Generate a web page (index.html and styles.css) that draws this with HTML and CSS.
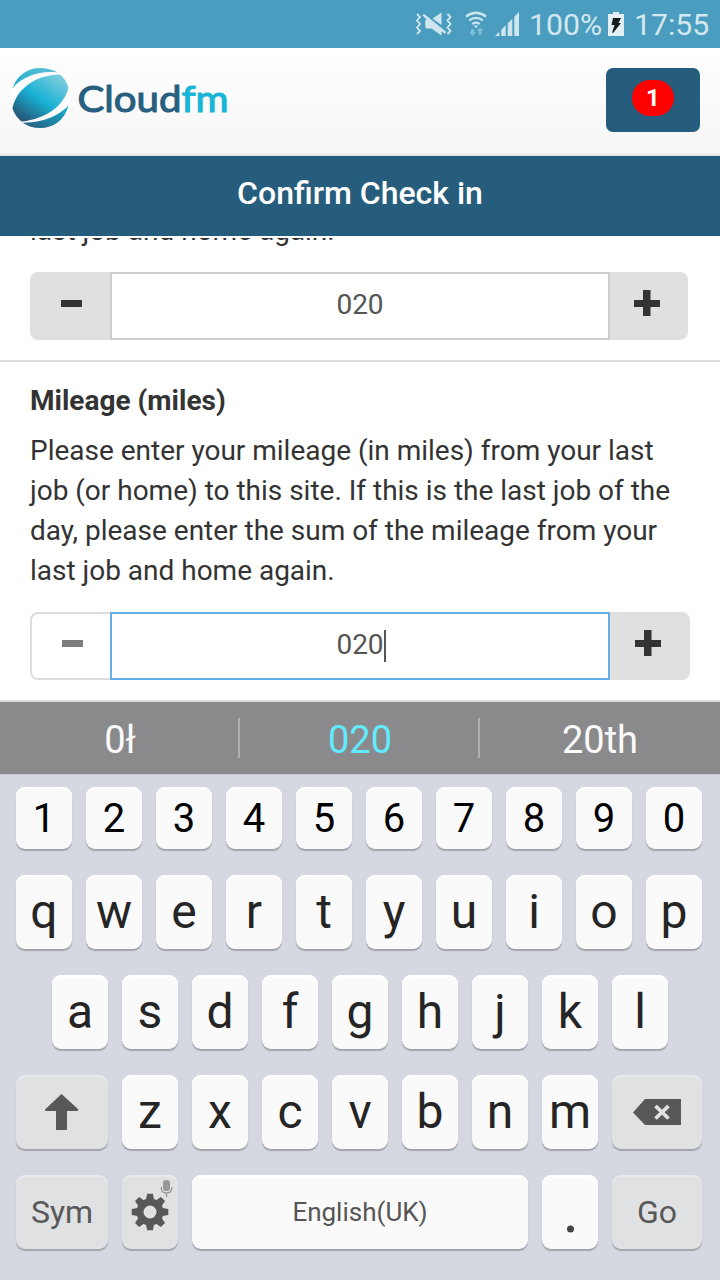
FILE: index.html
```html
<!DOCTYPE html>
<html lang="en">
<head>
<meta charset="utf-8">
<title>Confirm Check in</title>
<link rel="stylesheet" href="styles.css">
</head>
<body>
<div class="screen">
  <div class="status">
    <svg class="status-icons" width="110" height="48" viewBox="0 0 110 48">
      <path d="M2 14l3 3-3 3.500 3 3.500-3 3.500 3 3.500-3 3M32.500 14l3 3-3 3.500 3 3.500-3 3.500 3 3.500-3 3" fill="none" stroke="#cfe6ef" stroke-width="1.900"/>
      <path fill="#cfe6ef" d="M17.500 18.500L26.500 12.500V25zM7.500 15.500l1.500-1.700L31.300 32l-1.500 1.800-3.300-2.500V35.500L16.500 28.500H11l-.8-1.500v-6l1-2z"/>
      <path d="M51 16.500q10-7.500 20 0M54.200 20.300q6.800-5 13.600 0M57.300 24q3.700-2.800 7.400 0" fill="none" stroke="#cfe6ef" stroke-width="2.200"/>
      <path fill="#cfe6ef" d="M58.500 25.500h5L61 28z"/>
      <path fill="#7fbdd4" d="M56 29h3v3h2l-3.500 4-3.500-4h2zM63.500 35h3v-4h2l-3.500-3.500-3.500 3.500h2z"/>
      <path fill="#cfe6ef" d="M80 36l4.300-4.300V36zM86.300 29.700l4.400-4.400V36h-4.400zM92.700 23.300l4.600-4.600V36h-4.600zM99.300 16.700L104 12v24h-4.700z"/>
    </svg>
    <span class="status-text percent">100%</span>
    <svg class="battery" width="16" height="48" viewBox="0 0 16 48"><path fill="#e2f0f6" d="M0 14h5v-2h6v2h5v22H0z"/><path fill="#161a1d" d="M5 18h8l-2.500 5H13L5.500 32.500 4 33l2.500-8H3.500z"/></svg>
    <span class="status-text clock">17:55</span>
  </div>

  <header class="header">
    <svg class="logo" width="230" height="64" viewBox="0 0 230 64">
      <defs>
        <linearGradient id="globe" x1="0.850" y1="0.100" x2="0.150" y2="0.950">
          <stop offset="0" stop-color="#76cbdc"/><stop offset=".5" stop-color="#18b2d4"/><stop offset="1" stop-color="#275475"/>
        </linearGradient>
        <linearGradient id="cap" x1="0" y1="1" x2="1" y2="0">
          <stop offset="0" stop-color="#18a9cb"/><stop offset="1" stop-color="#62c3d8"/>
        </linearGradient>
        <linearGradient id="base" x1="0" y1="1" x2="1" y2="0">
          <stop offset="0" stop-color="#2a5a7c"/><stop offset="1" stop-color="#14b4d8"/>
        </linearGradient>
      </defs>
      <path fill="#fff" d="M11.500 22L60 6l9.500 16v18L22 58 11.500 42z"/>
      <path fill="url(#cap)" d="M12.500 22.500C17 9 28 2 40 2q10 0 17.500 4.500C41 4.500 22 10 12.500 22.500z"/>
      <path fill="url(#globe)" d="M12.500 42.500C15 27 31 9 60 8.500Q66.500 14 68.500 22C64 39 47 53 21.500 55.500Q15 50 12.500 42.500z"/>
      <path fill="url(#base)" d="M22.500 56.500C41 57.500 59 50 68.500 39.500C64.500 54 54 62 40 62q-10 0-17.500-5.500z"/>
      <text class="logo-text" x="77.500" y="45.500" textLength="151" lengthAdjust="spacingAndGlyphs">Cloud<tspan class="logo-fm">fm</tspan></text>
    </svg>
    <div class="menu-button"><span class="badge">1</span></div>
  </header>

  <h1 class="title">Confirm Check in</h1>

  <main class="form">
    <section class="field previous">
      <p class="description">last job and home again.</p>
      <div class="stepper narrow">
        <div class="step minus"><svg width="22" height="8"><path d="M0 0h21v7H0z" fill="#333"/></svg></div>
        <div class="value">020</div>
        <div class="step plus"><svg width="26" height="26"><path d="M9 0h7.500v10H26v7h-9.500v9H9v-9H0v-7h9z" fill="#333"/></svg></div>
      </div>
    </section>
    <section class="field current">
      <h2 class="label">Mileage (miles)</h2>
      <p class="description">Please enter your mileage (in miles) from your last<br>job (or home) to this site. If this is the last job of the<br>day, please enter the sum of the mileage from your<br>last job and home again.</p>
      <div class="stepper">
        <div class="step minus disabled"><svg width="22" height="8"><path d="M0 0h21v7H0z" fill="#7d7d7d"/></svg></div>
        <div class="value focused">020<span class="caret"></span></div>
        <div class="step plus"><svg width="26" height="26"><path d="M9 0h7.500v10H26v7h-9.500v9H9v-9H0v-7h9z" fill="#333"/></svg></div>
      </div>
    </section>
  </main>

  <div class="suggestions">
    <span class="suggestion">0ł</span><span class="suggestion active">020</span><span class="suggestion">20th</span>
  </div>

  <div class="keyboard">
    <div class="row digits">
      <span class="key">1</span><span class="key">2</span><span class="key">3</span><span class="key">4</span><span class="key">5</span><span class="key">6</span><span class="key">7</span><span class="key">8</span><span class="key">9</span><span class="key">0</span>
    </div>
    <div class="row">
      <span class="key">q</span><span class="key">w</span><span class="key">e</span><span class="key">r</span><span class="key">t</span><span class="key">y</span><span class="key">u</span><span class="key">i</span><span class="key">o</span><span class="key">p</span>
    </div>
    <div class="row home">
      <span class="key">a</span><span class="key">s</span><span class="key">d</span><span class="key">f</span><span class="key">g</span><span class="key">h</span><span class="key">j</span><span class="key">k</span><span class="key">l</span>
    </div>
    <div class="row">
      <span class="key special wide"><svg width="92" height="74" viewBox="0 0 92 74"><path fill="#585858" d="M45.500 19L62.500 34.500 61.500 36H51v19H40V36H29.500L29 34.500z"/></svg></span>
      <span class="key">z</span><span class="key">x</span><span class="key">c</span><span class="key">v</span><span class="key">b</span><span class="key">n</span><span class="key">m</span>
      <span class="key special end"><svg width="90" height="74" viewBox="0 0 90 74"><path fill="#585858" d="M21 37.500L33 24h36v26H33z"/><path d="M43.500 31l13 12.500M56.500 31l-13 12.500" stroke="#e0e1e3" stroke-width="3.800"/></svg></span>
    </div>
    <div class="row">
      <span class="key special wide">Sym</span>
      <span class="key special"><svg width="56" height="74" viewBox="0 0 56 74">
        <g fill="#585858" transform="translate(28 37)">
          <path id="tooth" d="M-2.900-18.300h5.800l1.400 7.300h-8.600z"/>
          <use href="#tooth" transform="rotate(45)"/><use href="#tooth" transform="rotate(90)"/><use href="#tooth" transform="rotate(135)"/><use href="#tooth" transform="rotate(180)"/><use href="#tooth" transform="rotate(225)"/><use href="#tooth" transform="rotate(270)"/><use href="#tooth" transform="rotate(315)"/>
        </g>
        <circle cx="28" cy="37" r="10" fill="none" stroke="#585858" stroke-width="7"/>
        <rect x="41" y="5" width="7" height="11" rx="3" fill="#989898"/>
        <path d="M39.300 12v1q0 5 5.200 5t5.200-5v-1M44.500 18v4" fill="none" stroke="#989898" stroke-width="1.300"/>
      </svg></span>
      <span class="key space">English(UK)</span>
      <span class="key"><svg width="56" height="74" viewBox="0 0 56 74"><circle cx="28.500" cy="54" r="3.500" fill="#444"/></svg></span>
      <span class="key special end">Go</span>
    </div>
  </div>
</div>
</body>
</html>
```
FILE: styles.css
```css
* { box-sizing: border-box; }
body { margin: 0; font-family: Roboto, "Liberation Sans", sans-serif; color: #333; }
svg { display: block; }
.screen { display: flex; flex-direction: column; width: 720px; height: 1280px; overflow: hidden; background: #fff; }

.status { display: flex; flex: none; height: 48px; padding-left: 415px; background: #4a9dbe; }
.status-icons { flex: none; }
.status-text { flex: none; font-size: 30.200px; line-height: 50px; color: #d3e8f0; white-space: nowrap; }
.percent { width: 78px; margin-left: 4px; }
.battery { flex: none; margin-left: 1px; }
.clock { margin-left: 10px; }

.header { display: flex; flex: none; justify-content: space-between; height: 108px; padding: 18px 20px 0 0; border-bottom: 2px solid #e5e5e5; background: linear-gradient(#fff, #f6f6f6); }
.logo-text { font-family: Lato, sans-serif; font-size: 37.500px; font-weight: 400; fill: #285f7f; stroke: #285f7f; stroke-width: 1.100px; }
.logo-fm { fill: #18b5d7; stroke: #18b5d7; }
.menu-button { display: flex; justify-content: center; width: 94px; height: 64px; margin-top: 2px; padding-top: 12px; border-radius: 7px; background: #265d7c; }
.badge { width: 42px; height: 36px; border-radius: 18px; background: #f00; color: #fff; font-size: 24px; font-weight: 700; line-height: 36px; text-align: center; }

.title { flex: none; height: 80px; margin: 0; background: #265d7c; color: #fff; font-size: 32px; font-weight: 500; line-height: 75px; text-align: center; }

.form { display: flex; flex: none; flex-direction: column; height: 466px; padding-top: 2px; overflow: hidden; }
.field { flex: none; padding: 0 30px; border-bottom: 2px solid #ddd; }
.previous { display: flex; flex-direction: column; justify-content: flex-end; height: 124px; padding-bottom: 20px; overflow: hidden; }
.current { height: 340px; padding-top: 19px; }
.label { margin: 0 0 10px; font-size: 28px; font-weight: 700; line-height: 40px; }
.description { margin: 0 0 21px; font-size: 28px; letter-spacing: -0.010px; line-height: 40px; white-space: nowrap; }
.stepper { display: flex; flex: none; width: 660px; height: 68px; }
.narrow { width: 658px; }
.step { display: flex; justify-content: center; align-items: flex-start; background: #e0e0e0; }
.minus { width: 80px; padding: 28px 0 0 4px; border-radius: 8px 0 0 8px; }
.disabled { padding: 26px 0 0 4px; border: 2px solid #ddd; border-right: 0; background: #fff; }
.plus { flex: 1; padding: 18px 4px 0 0; border-radius: 0 8px 8px 0; }
.value { display: flex; justify-content: center; width: 500px; border: 2px solid #ccc; color: #555; font-size: 28px; line-height: 61px; }
.focused { border-color: #66afe9; }
.caret { width: 2px; height: 32px; margin: 16px -2px 0 0; background: #555; }

.suggestions { display: flex; flex: none; height: 73px; border-bottom: 1px solid #c2c4c9; background: #8a8a8c; }
.suggestion { position: relative; flex: 1; color: #fafafa; font-size: 38px; line-height: 77px; text-align: center; }
.suggestion + .suggestion::before { content: ""; position: absolute; left: -2px; top: 16px; width: 2px; height: 40px; background: #b0b0b1; }
.active { color: #62ebff; }

.keyboard { display: flex; flex: 1; flex-direction: column; gap: 26px; padding: 12px 18px 0 16px; background: #d5d8e1; }
.row { display: flex; gap: 14px; height: 74px; }
.digits { height: 62px; }
.home { padding-left: 36px; }
.key { width: 56px; border-radius: 9px; background: #fafafa; box-shadow: 0 2px 1px #a2a5aa, inset 0 2px 1px #fff; color: #252525; font-size: 48px; line-height: 74px; text-align: center; }
.digits .key { color: #000; font-size: 40px; line-height: 64px; }
.special { background: #e0e1e3; box-shadow: 0 2px 1px #a2a5aa, inset 0 2px 1px #e9eaec; color: #585858; font-size: 32px; }
.wide { width: 92px; }
.end { width: 90px; }
.space { width: 336px; color: #555; font-size: 26px; }
```
